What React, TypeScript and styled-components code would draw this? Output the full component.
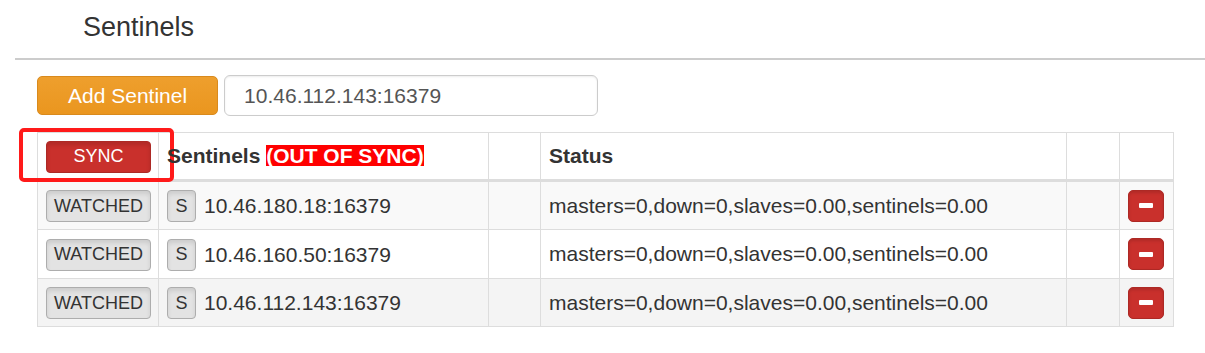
import React from 'react'
import styled, { createGlobalStyle } from 'styled-components'

interface Sentinel {
  host: string
  status: string
}

const sentinels: Sentinel[] = [
  { host: '10.46.180.18:16379', status: 'masters=0,down=0,slaves=0.00,sentinels=0.00' },
  { host: '10.46.160.50:16379', status: 'masters=0,down=0,slaves=0.00,sentinels=0.00' },
  { host: '10.46.112.143:16379', status: 'masters=0,down=0,slaves=0.00,sentinels=0.00' },
]

const rowColors = ['#f9f9f9', '#ffffff', '#f4f4f4']

const App: React.FC = () => (
  <>
    <GlobalStyle />
    <Page>
      <Title>Sentinels</Title>
      <Rule />
      <Toolbar>
        <AddButton type="button">Add Sentinel</AddButton>
        <HostInput defaultValue="10.46.112.143:16379" />
      </Toolbar>
      <Table>
        <colgroup>
          <col style={{ width: 121 }} />
          <col style={{ width: 330 }} />
          <col style={{ width: 52 }} />
          <col style={{ width: 526 }} />
          <col style={{ width: 53 }} />
          <col style={{ width: 54 }} />
        </colgroup>
        <thead>
          <tr>
            <HeadCell>
              <Highlight />
              <SyncButton type="button">SYNC</SyncButton>
            </HeadCell>
            <HeadCell>
              Sentinels <OutOfSync>(OUT OF SYNC)</OutOfSync>
            </HeadCell>
            <HeadCell />
            <HeadCell>Status</HeadCell>
            <HeadCell />
            <HeadCell />
          </tr>
        </thead>
        <tbody>
          {sentinels.map((sentinel, index) => (
            <Row key={sentinel.host} $bg={rowColors[index % rowColors.length]}>
              <Cell>
                <PressedButton type="button" $wide>WATCHED</PressedButton>
              </Cell>
              <Cell>
                <PressedButton type="button">S</PressedButton>
                <Host>{sentinel.host}</Host>
              </Cell>
              <Cell />
              <Cell>{sentinel.status}</Cell>
              <Cell />
              <Cell>
                <RemoveButton type="button" title="Remove">
                  <Minus />
                </RemoveButton>
              </Cell>
            </Row>
          ))}
        </tbody>
      </Table>
    </Page>
  </>
)
export default App

const GlobalStyle = createGlobalStyle`
  body {
    margin: 0;
    background: #ffffff;
    font-family: "Liberation Sans", Arial, sans-serif;
    color: #333333;
  }
`
const Page = styled.div`
  padding-left: 15px;
  overflow: hidden;
`
const Title = styled.h4`
  margin: 12px 0 16px 68px;
  font-size: 27px;
  line-height: 30px;
  font-weight: 500;
  color: #333333;
`
const Rule = styled.hr`
  margin: 0;
  border: none;
  height: 2px;
  background-color: #cccccc;
`
const Toolbar = styled.div`
  display: flex;
  align-items: center;
  gap: 6px;
  margin: 15px 0 16px 22px;
`
const AddButton = styled.button`
  height: 39px;
  padding: 0 30px;
  border: 1px solid #d98a1d;
  border-radius: 5px;
  background: linear-gradient(to bottom, #ee9f2d 0%, #ea961f 100%);
  color: #ffffff;
  font-family: inherit;
  font-size: 21px;
`
const HostInput = styled.input`
  box-sizing: border-box;
  width: 374px;
  height: 41px;
  padding: 0 19px;
  border: 1px solid #cccccc;
  border-radius: 6px;
  box-shadow: inset 0 1px 2px rgba(0, 0, 0, 0.08);
  color: #555555;
  font-family: inherit;
  font-size: 21px;
  outline: none;
`
const Table = styled.table`
  margin-left: 22px;
  width: 1136px;
  table-layout: fixed;
  border-collapse: collapse;
  border: 1px solid #dddddd;
  font-size: 21px;
`
const HeadCell = styled.th`
  position: relative;
  height: 46px;
  padding: 0 8px;
  border: 1px solid #dddddd;
  border-bottom: 3px solid #dddddd;
  text-align: left;
  vertical-align: middle;
  font-weight: bold;
  white-space: nowrap;
`
const Highlight = styled.span`
  position: absolute;
  left: -19px;
  top: -5px;
  width: 147px;
  height: 46px;
  border: 4px solid #ff1a1a;
  border-radius: 5px;
  pointer-events: none;
`
const OutOfSync = styled.span`
  display: inline-block;
  line-height: 21px;
  background-color: #ff0000;
  color: #ffffff;
`
const Row = styled.tr<{ $bg: string }>`
  background-color: ${({ $bg }) => $bg};
`
const Cell = styled.td`
  height: 32px;
  padding: 7px 8px;
  border: 1px solid #dddddd;
  vertical-align: middle;
  white-space: nowrap;
  line-height: 32px;
`
const Host = styled.span`
  margin-left: 8px;
  vertical-align: middle;
`
const SyncButton = styled.button`
  display: block;
  box-sizing: border-box;
  width: 105px;
  height: 32px;
  margin-top: 1px;
  padding: 0;
  border: 1px solid #ad2925;
  border-radius: 4px;
  background-color: #c9302c;
  box-shadow: inset 0 3px 4px rgba(0, 0, 0, 0.12);
  color: #ffffff;
  font-family: inherit;
  font-size: 18px;
`
const PressedButton = styled.button<{ $wide?: boolean }>`
  box-sizing: border-box;
  width: ${({ $wide }) => ($wide ? '105px' : '29px')};
  height: 32px;
  padding: 0;
  border: 1px solid #adadad;
  border-radius: 4px;
  background-color: #e3e3e3;
  box-shadow: inset 0 3px 4px rgba(0, 0, 0, 0.1);
  color: #333333;
  font-family: inherit;
  font-size: 18px;
  vertical-align: middle;
`
const RemoveButton = styled.button`
  display: flex;
  align-items: center;
  justify-content: center;
  width: 36px;
  height: 32px;
  padding: 0;
  border: 1px solid #ad2925;
  border-radius: 5px;
  background-color: #c9302c;
  box-shadow: inset 0 2px 3px rgba(0, 0, 0, 0.12);
`
const Minus = styled.span`
  display: block;
  width: 14px;
  height: 5px;
  border-radius: 1px;
  background-color: #ffffff;
`
